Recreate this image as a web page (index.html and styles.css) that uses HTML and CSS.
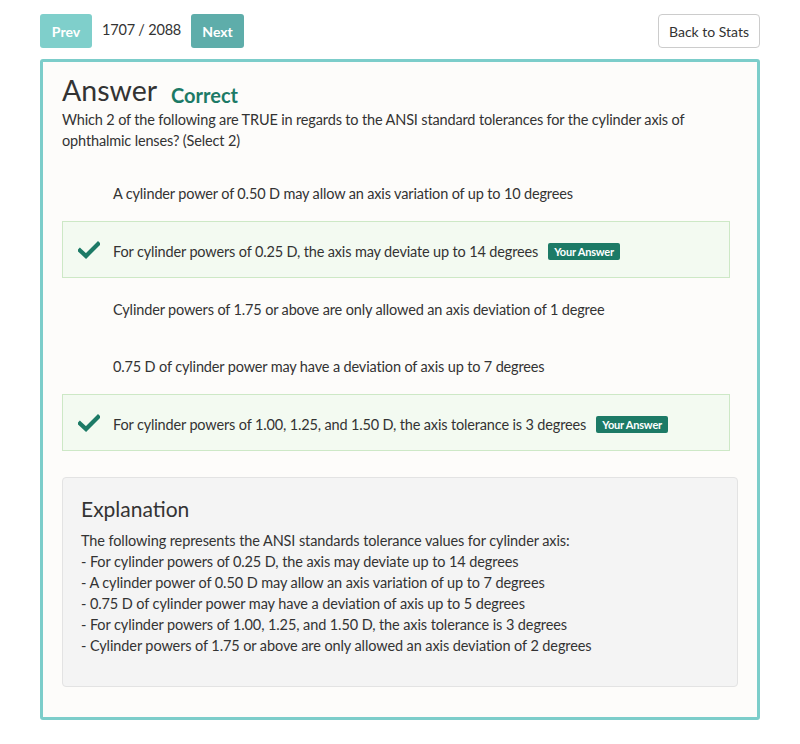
FILE: index.html
```html
<!DOCTYPE html>
<html>
<head>
<meta charset="utf-8">
<link rel="stylesheet" href="styles.css">
</head>
<body>
<div class="topbar">
  <div class="nav">
    <button class="btn btn-prev">Prev</button>
    <span class="count">1707 / 2088</span>
    <button class="btn btn-next">Next</button>
  </div>
  <button class="btn-back">Back to Stats</button>
</div>
<div class="card">
  <div class="title">
    <h1>Answer</h1>
    <span class="status">Correct</span>
  </div>
  <p class="question">Which 2 of the following are TRUE in regards to the ANSI standard tolerances for the cylinder axis of ophthalmic lenses? (Select 2)</p>
  <div class="options">
    <div class="option"><span class="mark"></span><span class="text">A cylinder power of 0.50 D may allow an axis variation of up to 10 degrees</span></div>
    <div class="option selected"><span class="mark"><svg width="22" height="18" viewBox="0 0 22 18"><path d="M2 9.5 L8 15 L20 3" fill="none" stroke="#1c7a66" stroke-width="4.2" stroke-linecap="square"/></svg></span><span class="text">For cylinder powers of 0.25 D, the axis may deviate up to 14 degrees</span><span class="badge">Your Answer</span></div>
    <div class="option"><span class="mark"></span><span class="text">Cylinder powers of 1.75 or above are only allowed an axis deviation of 1 degree</span></div>
    <div class="option"><span class="mark"></span><span class="text">0.75 D of cylinder power may have a deviation of axis up to 7 degrees</span></div>
    <div class="option selected"><span class="mark"><svg width="22" height="18" viewBox="0 0 22 18"><path d="M2 9.5 L8 15 L20 3" fill="none" stroke="#1c7a66" stroke-width="4.2" stroke-linecap="square"/></svg></span><span class="text">For cylinder powers of 1.00, 1.25, and 1.50 D, the axis tolerance is 3 degrees</span><span class="badge">Your Answer</span></div>
  </div>
  <div class="explanation">
    <h2>Explanation</h2>
    <p>The following represents the ANSI standards tolerance values for cylinder axis:<br>
    - For cylinder powers of 0.25 D, the axis may deviate up to 14 degrees<br>
    - A cylinder power of 0.50 D may allow an axis variation of up to 7 degrees<br>
    - 0.75 D of cylinder power may have a deviation of axis up to 5 degrees<br>
    - For cylinder powers of 1.00, 1.25, and 1.50 D, the axis tolerance is 3 degrees<br>
    - Cylinder powers of 1.75 or above are only allowed an axis deviation of 2 degrees</p>
  </div>
</div>
</body>
</html>
```
FILE: styles.css
```css
* { box-sizing: border-box; }
body {
  margin: 0;
  padding: 14px 40px 0 40px;
  font-family: Lato, "Open Sans", sans-serif;
  color: #333;
  background: #fff;
}
.topbar {
  display: flex;
  justify-content: space-between;
  align-items: center;
  height: 34px;
}
.nav { display: flex; align-items: center; }
.btn {
  border: none;
  border-radius: 3px;
  color: #fff;
  font-family: Lato, sans-serif;
  font-weight: bold;
  font-size: 14px;
  height: 34px;
  padding: 0;
}
.btn-prev { background: #7fcfcb; width: 52px; }
.btn-next { background: #5eadaa; width: 53px; }
.count { font-size: 14.5px; margin: 0 10px; white-space: nowrap; letter-spacing: -0.2px; position: relative; top: -2px; }
.btn-back {
  background: #fff;
  border: 1px solid #ccc;
  border-radius: 4px;
  height: 34px;
  width: 102px;
  font-family: Lato, sans-serif;
  font-size: 14px;
  color: #333;
  padding: 0;
}
.card {
  margin-top: 11px;
  border: 3px solid #7ccdca;
  border-radius: 3px;
  background: #fdfcfa;
  padding: 9px 19px 30px 19px;
  height: 661px;
}
.title { display: flex; align-items: baseline; }
.title h1 {
  margin: 0;
  font-size: 28.5px;
  font-weight: normal;
  line-height: 38px;
}
.status {
  color: #1c7a66;
  font-weight: bold;
  font-size: 20px;
  margin-left: 14px;
  position: relative;
  top: 2px;
}
.question {
  margin: 0;
  font-size: 14.5px;
  line-height: 21px;
  letter-spacing: -0.15px;
}
.options { margin-top: 12px; margin-right: 8px; }
.option {
  display: flex;
  align-items: center;
  height: 57.7px;
  padding-top: 4px;
  border: 1px solid transparent;
  font-size: 14.5px;
}
.option .text { letter-spacing: -0.15px; }
.option.selected {
  background: #f3faf1;
  border-color: #cde8c6;
}
.mark { width: 50px; padding-left: 15px; display: flex; position: relative; top: -2px; }
.badge {
  background: #1c7a66;
  color: #fff;
  font-size: 11px;
  font-weight: bold;
  padding: 2px 6px;
  border-radius: 2px;
  margin-left: 10px;
  letter-spacing: -0.2px;
}
.explanation {
  margin-top: 26px;
  background: #f4f4f4;
  border: 1px solid #e3e3e3;
  border-radius: 4px;
  padding: 16px 18px 30px 18px;
  height: 210px;
}
.explanation h2 {
  margin: 0 0 6px 0;
  font-size: 21px;
  font-weight: normal;
  line-height: 30px;
}
.explanation p {
  margin: 0;
  font-size: 14.5px;
  line-height: 21px;
  letter-spacing: -0.1px;
}
```
